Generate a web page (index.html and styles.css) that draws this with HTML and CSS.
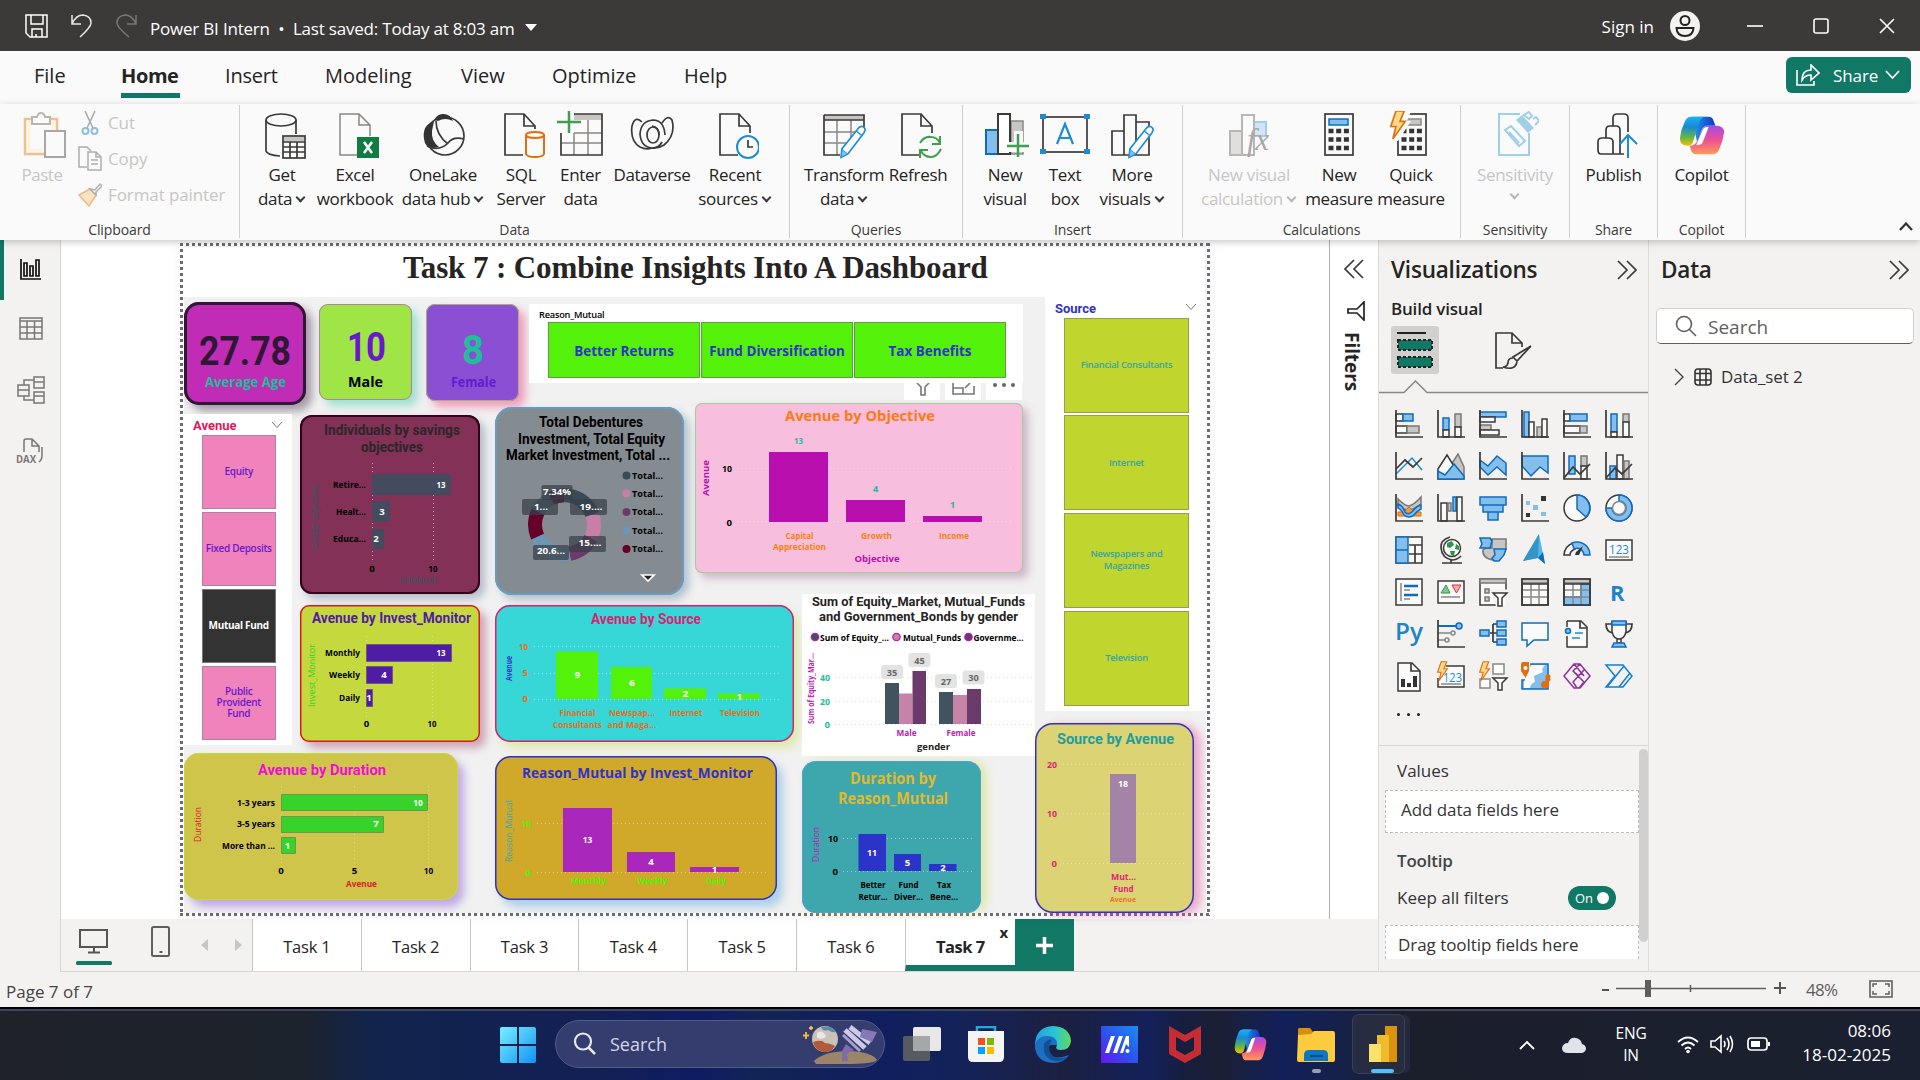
FILE: index.html
```html
<!DOCTYPE html>
<html lang="en">
<head>
<meta charset="utf-8">
<title>Power BI Intern</title>
<link rel="stylesheet" href="styles.css">
</head>
<body>
<svg class="defs" aria-hidden="true">
  <defs>
    <symbol id="axis" viewBox="0 0 28 28"><path class="k" d="M1 0V27H28"/></symbol>
    <symbol id="bolt" viewBox="0 0 16 30"><path fill="#fcd98a" stroke="#e0700f" stroke-width="1.6" d="M6 1H14L10 11H15L3 28L6 16H1Z"/></symbol>
    <symbol id="pencil" viewBox="0 0 32 40"><path fill="#fafafa" stroke="#1e8bd3" stroke-width="2" d="M3 28L23 3Q27 0 30 4Q31 6 29 9L10 34L2 38Z"/><path fill="#83beec" stroke="#1e8bd3" d="M3 29L10 34L2 38Z"/><path stroke="#1e8bd3" stroke-width="1.5" d="M20 7L26 12"/></symbol>
    <symbol id="dbl" viewBox="0 0 20 20"><path class="k" d="M1 1L10 10L1 19M10 1L19 10L10 19"/></symbol>
    <linearGradient id="cpA" x1="0" y1="0" x2="0" y2="1"><stop offset="0" stop-color="#19b5f1"/><stop offset=".35" stop-color="#1a87d8"/><stop offset=".7" stop-color="#5fb648"/><stop offset="1" stop-color="#f6c000"/></linearGradient>
    <linearGradient id="cpB" x1="0" y1="0" x2="0" y2="1"><stop offset="0" stop-color="#a34be8"/><stop offset=".5" stop-color="#ee5092"/><stop offset="1" stop-color="#ff9a5a"/></linearGradient>
    <linearGradient id="cpC" x1="0" y1="0" x2="1" y2="0"><stop offset="0" stop-color="#1ba0ee"/><stop offset="1" stop-color="#1038c4"/></linearGradient>
    <linearGradient id="win" x1="0" y1="0" x2="1" y2="1"><stop offset="0" stop-color="#77f0ff"/><stop offset="1" stop-color="#1292f5"/></linearGradient>
    <linearGradient id="edgeG" x1="0" y1="0" x2="1" y2="0"><stop offset="0" stop-color="#249fe0"/><stop offset=".55" stop-color="#2bc4d6"/><stop offset="1" stop-color="#5fdc58"/></linearGradient>
    <linearGradient id="asus" x1="0" y1="1" x2="1" y2="0"><stop offset="0" stop-color="#6a11f5"/><stop offset=".5" stop-color="#2a55ee"/><stop offset="1" stop-color="#1b8cf5"/></linearGradient>
    <symbol id="copilot" viewBox="0 0 48 48">
      <path fill="url(#cpC)" d="M13 2H31Q35 2 36 7L38 13H30Q25 13 23 20L19 33Z"/>
      <path fill="url(#cpA)" d="M13 2H26Q22 4 20 12L15 31Q14 37 9 37Q1 37 1 28Q2 17 6 8Q8 2 13 2Z"/>
      <path fill="url(#cpB)" d="M39 13Q47 13 47 21Q46 31 42 41Q40 47 35 47H17Q13 47 12 40L11 37Q17 37 19 31L24 18Q26 13 31 13Z"/>
      <path fill="#fff" d="M25 17Q26 14 31 14L25 32Q24 36 18 36Z"/>
    </symbol>
  </defs>
</svg>

<header class="titlebar">
  <svg width="24" height="24" viewBox="0 0 24 24"><path d="M1 1H22V23H5L1 19ZM6 1V10H18V1M7 23V15H17V23M11 20V23" fill="none" stroke="#fff" stroke-width="1.5"/></svg>
  <svg class="undo" width="22" height="24" viewBox="0 0 22 24"><path d="M1 1V10H10M1 10Q5 1 12 1Q20 2 20 9Q20 13 9 23" fill="none" stroke="#e8e8e8" stroke-width="1.5"/></svg>
  <svg class="redo" width="22" height="24" viewBox="0 0 22 24"><path d="M20 1V10H11M20 10Q16 1 9 1Q1 2 1 9Q1 13 13 23" fill="none" stroke="#797775" stroke-width="1.5"/></svg>
  <span class="doc-name">Power BI Intern&nbsp; • &nbsp;Last saved: Today at 8:03 am</span>
  <i class="caret"></i>
  <span class="spacer"></span>
  <span class="signin">Sign in</span>
  <svg class="avatar" width="30" height="30" viewBox="0 0 30 30"><circle cx="15" cy="15" r="15" fill="#f3f2f1"/><circle cx="15" cy="9.500" r="4.500" fill="none" stroke="#222" stroke-width="2"/><path d="M6.500 17H23.500Q23 25 15 25Q7 25 6.500 17Z" fill="none" stroke="#222" stroke-width="2"/></svg>
  <svg class="wc" width="16" height="16" viewBox="0 0 16 16"><path d="M0 8H16" stroke="#fff" stroke-width="1.6"/></svg>
  <svg class="wc" width="16" height="16" viewBox="0 0 16 16"><rect x="1" y="1" width="14" height="14" rx="2" fill="none" stroke="#fff" stroke-width="1.6"/></svg>
  <svg class="wc" width="16" height="16" viewBox="0 0 16 16"><path d="M1 1L15 15M15 1L1 15" stroke="#fff" stroke-width="1.6"/></svg>
</header>

<nav class="menu">
  <a class="m1">File</a><a class="m2 on">Home</a><a class="m3">Insert</a><a class="m4">Modeling</a><a class="m5">View</a><a class="m6">Optimize</a><a class="m7">Help</a>
  <span class="spacer"></span>
  <button class="share"><svg width="24" height="22" viewBox="0 0 24 22"><path d="M1 6V21H18V17M6 16Q6 6 15 6V1L23 9L15 16V11Q9 11 6 16Z" fill="none" stroke="#fff" stroke-width="1.6"/></svg><span>Share</span><svg width="15" height="10" viewBox="0 0 15 10"><path d="M1 1L7.500 8L14 1" fill="none" stroke="#fff" stroke-width="1.6"/></svg></button>
</nav>

<section class="ribbon">
  <div class="grp clipboard">
    <div class="btns">
      <div class="rb dim paste"><svg width="48" height="48" viewBox="0 0 48 48"><path d="M13 8H7V43H26M33 8H39V19" fill="none" stroke="#efc08c" stroke-width="2.500"/><path d="M10 11V40H25V20H36V11Z" fill="#fdf2d6"/><path d="M12 14V38H25V20H34V14Z" fill="#fafafa"/><path d="M14 6H19Q20 2 23 2Q26 2 27 6H32V13H14Z" fill="#fafafa" stroke="#b8b6b4" stroke-width="2"/><rect x="27" y="20" width="20" height="26" fill="#fafafa" stroke="#a9a7a5" stroke-width="2"/></svg><span>Paste</span></div>
      <div class="clip-list dim">
        <div><svg width="24" height="26" viewBox="0 0 24 26"><path d="M7 1L15 18M17 1L9 18" stroke="#a9a7a5" stroke-width="1.500"/><circle cx="7.500" cy="21" r="3" fill="none" stroke="#8ebfdf" stroke-width="2"/><circle cx="16.500" cy="21" r="3" fill="none" stroke="#8ebfdf" stroke-width="2"/></svg><span>Cut</span></div>
        <div><svg width="24" height="26" viewBox="0 0 24 26"><path d="M9 21H1V1H9L13 5M10 6H18L23 11V24H10ZM18 6V11H23M13 14H20M13 18H20" fill="none" stroke="#b0aeac" stroke-width="1.500"/></svg><span>Copy</span></div>
        <div><svg width="24" height="26" viewBox="0 0 24 26"><path d="M1 13L12 7L18 13L11 24Z" fill="#fbe3c0" stroke="#edb98a" stroke-width="1.500"/><path d="M12 7L17 8L22 2L24 4L18 10L18 13Z" fill="#fff" stroke="#b0aeac" stroke-width="1.500"/></svg><span>Format painter</span></div>
      </div>
    </div>
    <h6>Clipboard</h6>
  </div>
  <div class="grp data">
    <div class="btns">
      <div class="rb w60"><svg width="48" height="48" viewBox="0 0 48 48"><path class="k" d="M8 9V40Q9 44 22 45M38 9V23"/><ellipse class="k" cx="23" cy="9" rx="15" ry="6"/><rect x="25" y="25" width="22" height="22" class="k"/><path fill="#c8c6c4" d="M26 26H46V30H26Z"/><path class="k" stroke-width="1" d="M25 31H47M25 36H47M25 41H47M32 31V47M39 31V47"/></svg><span>Get<br>data<b></b></span></div>
      <div class="rb w86"><svg width="48" height="48" viewBox="0 0 48 48"><path class="kg" d="M26 44H9V3H28L39 14V25M28 3V14H39"/><rect x="26" y="26" width="22" height="21" fill="#107c41"/><path d="M33 31L41 42M41 31L33 42" stroke="#fff" stroke-width="2.500"/></svg><span>Excel<br>workbook</span></div>
      <div class="rb w90"><svg width="48" height="48" viewBox="0 0 48 48"><ellipse class="k" cx="26" cy="25" rx="19" ry="19"/><path fill="#333" d="M15 9Q19 2 25 3Q32 4 34 10Q26 6 19 10ZM15 10Q3 14 5 28Q6 37 14 37L20 36Q12 30 13 20Z"/><path class="k" d="M17 10Q17 24 29 33M8 35Q20 41 29 32Q34 25 45 28"/></svg><span>OneLake<br>data hub<b></b></span></div>
      <div class="rb w66"><svg width="48" height="48" viewBox="0 0 48 48"><path class="k" d="M26 44H8V3H27L38 15V18M27 3V15H38"/><path fill="#fafafa" stroke="#e0700f" stroke-width="2" d="M29 24V43Q30 46 38 46Q46 46 47 43V24"/><ellipse cx="38" cy="24" rx="9" ry="3" fill="#fafafa" stroke="#e0700f" stroke-width="2"/></svg><span>SQL<br>Server</span></div>
      <div class="rb w53"><svg width="48" height="48" viewBox="0 0 48 48"><path fill="#c8c6c4" d="M17 3H45V9H17Z"/><path class="kg" d="M4 32H45M17 22V44M31 9V44M17 22H45"/><path class="k" d="M17 3H45V44H4V22"/><path d="M12 0V22M0 11H24" stroke="#3f9f4f" stroke-width="2.500"/></svg><span>Enter<br>data</span></div>
      <div class="rb w90"><svg width="48" height="48" viewBox="0 0 48 48"><ellipse class="k" cx="25" cy="24" rx="6" ry="8"/><path class="k" d="M37 24Q36 9 25 9Q13 10 12 23Q13 36 24 37Q31 37 34 31M31 24Q31 16 24 15M14 11Q7 4 4 15Q2 30 12 36Q18 39 24 37M34 12Q40 3 44 9Q48 24 36 34Q30 38 24 37"/></svg><span>Dataverse</span></div>
      <div class="rb w76"><svg width="48" height="48" viewBox="0 0 48 48"><path class="k" d="M27 44H9V3H28L39 15V22M28 3V15H39"/><circle cx="37" cy="36" r="11" fill="#fafafa" stroke="#1e8bd3" stroke-width="2"/><path class="k" d="M37 29V36H42"/></svg><span>Recent<br>sources<b></b></span></div>
    </div>
    <h6>Data</h6>
  </div>
  <div class="grp queries">
    <div class="btns">
      <div class="rb w78"><svg width="48" height="48" viewBox="0 0 48 48"><path class="kg" d="M4 21H40M4 32H28M17 9V44M31 9V30"/><path fill="#c8c6c4" d="M4 4H44V9H4Z"/><path class="k" d="M4 4H44V20M4 9H44M4 4V44H20"/><use href="#pencil" x="17" y="14" width="32" height="34"/></svg><span>Transform<br>data<b></b></span></div>
      <div class="rb w70"><svg width="48" height="48" viewBox="0 0 48 48"><path class="k" d="M27 44H8V3H27L38 15V22M27 3V15H38"/><path d="M26 32Q30 25 37 26Q43 26 46 32M46 25V33H38M47 38Q43 46 37 46Q30 46 27 40M26 47V39H34" fill="none" stroke="#3f9f4f" stroke-width="2"/></svg><span>Refresh</span></div>
    </div>
    <h6>Queries</h6>
  </div>
  <div class="grp insert">
    <div class="btns">
      <div class="rb w56"><svg width="48" height="48" viewBox="0 0 48 48"><path fill="#c8c6c4" stroke="#8a8886" stroke-width="1.500" d="M30 10H42V43H30Z"/><path fill="#83beec" stroke="#0f6cbd" stroke-width="2" d="M5 19H17V43H5Z"/><path fill="#fff" stroke="#3b3a39" stroke-width="2" d="M17 3H29V43H17Z"/><path fill="#fafafa" d="M33 20H42V31H48V41H26V31H33Z"/><path d="M37 23V46M26 35H48" stroke="#3f9f4f" stroke-width="2.500"/></svg><span>New<br>visual</span></div>
      <div class="rb w64"><svg width="50" height="48" viewBox="0 0 50 48"><rect x="3" y="6" width="44" height="35" class="k"/><path fill="#1e8bd3" d="M0 3H6V8H0ZM44 3H50V8H44ZM0 38H6V43H0ZM44 38H50V43H44Z"/><path d="M17 33L25 13L33 33M20 27H30" fill="none" stroke="#1e8bd3" stroke-width="2.200"/></svg><span>Text<br>box</span></div>
      <div class="rb w70"><svg width="48" height="48" viewBox="0 0 48 48"><path class="k" d="M16 44H4V20H16M16 4H28V44H16ZM28 11H41V44H28"/><use href="#pencil" x="17" y="14" width="32" height="34"/></svg><span>More<br>visuals<b></b></span></div>
    </div>
    <h6>Insert</h6>
  </div>
  <div class="grp calc">
    <div class="btns">
      <div class="rb w104 dim"><svg width="48" height="48" viewBox="0 0 48 48"><path fill="#e1dfdd" stroke="#b8b6b4" stroke-width="2" d="M5 20H17V44H5Z"/><path fill="#cfe4f5" stroke="#a5cde8" stroke-width="2" d="M29 11H41V25H29Z"/><path fill="#fafafa" stroke="#b8b6b4" stroke-width="2" d="M17 4H29V44H17Z"/><text class="fx" x="22" y="39">fx</text></svg><span>New visual<br>calculation<b></b></span></div>
      <div class="rb w76"><svg width="48" height="48" viewBox="0 0 48 48"><rect x="10" y="3" width="28" height="41" class="k"/><rect x="14" y="8" width="19" height="6" fill="#83beec" stroke="#0f6cbd" stroke-width="1.500"/><path d="M13.500 20H34M13.500 28.500H34M13.500 37H34" stroke="#333" stroke-width="4.500" stroke-dasharray="5 2.700"/></svg><span>New<br>measure</span></div>
      <div class="rb w68"><svg width="48" height="48" viewBox="0 0 48 48"><rect x="11" y="3" width="28" height="41" class="k"/><rect x="17" y="8" width="17" height="6" fill="#c8c6c4" stroke="#8a8886" stroke-width="1.500"/><path d="M14.500 20H35M14.500 28.500H35M14.500 37H35" stroke="#333" stroke-width="4.500" stroke-dasharray="5 2.700"/><path fill="#fafafa" d="M7 0H24L20 10H24L11 30H0Z"/><use href="#bolt" x="1" y="-1" width="20" height="31"/></svg><span>Quick<br>measure</span></div>
    </div>
    <h6>Calculations</h6>
  </div>
  <div class="grp sens"><div class="btns"><div class="rb w108 dim"><svg width="48" height="48" viewBox="0 0 48 48"><path d="M29 3H8V44H38V22" fill="none" stroke="#9fcfe9" stroke-width="2"/><path d="M14 19L20 15L34 30L28 35Z" fill="none" stroke="#9fcfe9" stroke-width="2"/><path d="M25 9L31 4L43 17L37 22Z" fill="#9fcfe9"/><path d="M33 4L38 1L41 5L38 8ZM42 8L45 6L48 10L44 14" fill="none" stroke="#9fcfe9" stroke-width="2"/><path d="M18 21L28 32" stroke="#9fcfe9" stroke-width="2"/></svg><span>Sensitivity<br><b class="solo"></b></span></div></div><h6>Sensitivity</h6></div>
  <div class="grp shr"><div class="btns"><div class="rb w87"><svg width="48" height="48" viewBox="0 0 48 48"><path class="k" d="M23 43H11Q8 43 8 39V31Q8 27 12 27H18Q23 27 23 31V43H30V19Q30 15 26 15H20Q16 15 16 19V27M23 15V7Q23 3 27 3H34Q38 3 38 7V21M30 43H34"/><path d="M38 47V24M30 33L38 24L47 33" fill="none" stroke="#1e8bd3" stroke-width="2"/></svg><span>Publish</span></div></div><h6>Share</h6></div>
  <div class="grp cop"><div class="btns"><div class="rb w87"><svg width="46" height="40" viewBox="0 0 48 48" preserveAspectRatio="none" class="cp"><use href="#copilot"/></svg><span>Copilot</span></div></div><h6>Copilot</h6></div>
  <svg class="collapse" width="14" height="9" viewBox="0 0 14 9"><path d="M1 8L7 1.500L13 8" fill="none" stroke="#333" stroke-width="2.200"/></svg>
</section>

<main class="workspace">
  <aside class="rail">
    <svg width="24" height="24" viewBox="0 0 24 24"><path d="M2 1V21H22M5 5H8V18H5ZM11 8H14V18H11ZM17 2H20V18H17Z" fill="none" stroke="#111" stroke-width="1.700"/></svg>
    <svg width="24" height="24" viewBox="0 0 24 24"><path d="M1 1H23V22H1ZM1 4H23M1 10H23M1 16H23M8 4V22M15.500 4V22" fill="none" stroke="#797775" stroke-width="1.500"/></svg>
    <svg width="28" height="28" viewBox="0 0 28 28"><path d="M1 9H12V20H1ZM1 14H12M17 1H27V12H17ZM17 6H27M17 16H27V27H17ZM17 20H27M7 9V4H17M7 20V24H17" fill="none" stroke="#797775" stroke-width="1.500"/></svg>
    <svg width="30" height="30" viewBox="-1 0 30 30"><path d="M8 14V3Q8 1 10 1H16L23 8V14M16 1V8H23M26 9V17Q26 22 23 24" fill="none" stroke="#797775" stroke-width="1.500"/><text x="0" y="25" class="dax" textLength="20">DAX</text></svg>
  </aside>

  <div class="center">
    <div class="upper">
      <div class="stage">
        <div class="page">
          <div class="title-strip">Task 7 : Combine Insights Into A Dashboard</div>

          <div class="v card1"><svg viewBox="184 302 122 103"><text class="din" font-size="40" x="199" y="365" textLength="92" fill="#2f1735">27.78</text><text class="seg" font-size="14" x="205" y="387" textLength="81" fill="#20bd9a">Average Age</text></svg></div>
          <div class="v card2"><svg viewBox="319 304 93 96"><text class="din" font-size="40" x="347" y="361" textLength="19" fill="#6a18cd">1</text><text class="din" font-size="40" x="366" y="361" textLength="20" fill="#6a18cd">0</text><text class="seg" font-size="15" x="348" y="387" textLength="35">Male</text></svg></div>
          <div class="v card3"><svg viewBox="426 304 93 97"><text class="din" font-size="41" x="462" y="364" textLength="22" fill="#1fbf9c">8</text><text class="seg" font-size="15" x="451" y="387" textLength="45" fill="#611bd0">Female</text></svg></div>

          <div class="v reason"><span>Reason_Mutual</span><div><b>Better Returns</b><b>Fund Diversification</b><b>Tax Benefits</b></div></div>
          <div class="v vtools">
            <i><svg viewBox="0 0 36 17"><path d="M13 0L17 4V12H21V4L25 0" fill="none" stroke="#777" stroke-width="1.600"/></svg></i>
            <i><svg viewBox="0 0 36 17"><path d="M8 0V11H29V3M8 5H18V11M20 5L25 0" fill="none" stroke="#777" stroke-width="1.600"/></svg></i>
            <i><svg viewBox="0 0 36 17"><circle cx="9" cy="2" r="2" fill="#666"/><circle cx="18" cy="2" r="2" fill="#666"/><circle cx="27" cy="2" r="2" fill="#666"/></svg></i>
          </div>

          <div class="v slicer avenue"><h5>Avenue<svg width="12" height="8" viewBox="0 0 12 8"><path d="M1 1L6 6.500L11 1" fill="none" stroke="#777"/></svg></h5><b>Equity</b><b>Fixed Deposits</b><b class="sel">Mutual Fund</b><b>Public<br>Provident<br>Fund</b></div>

          <div class="v source slicer"><h5>Source<svg width="12" height="8" viewBox="0 0 12 8"><path d="M1 1L6 6.500L11 1" fill="none" stroke="#777"/></svg></h5><b>Financial Consultants</b><b>Internet</b><b>Newspapers and<br>Magazines</b><b>Television</b></div>

          <div class="v savings"><svg viewBox="300 415 180 179">
            <g class="din" font-size="14" fill="#2a2729"><text x="324" y="435" textLength="136">Individuals by savings</text><text x="361" y="452" textLength="62">objectives</text></g>
            <path class="grid" stroke="#c8a0b4" d="M372.500 463V562M433.500 463V562"/>
            <path fill="#454b5e" d="M372 474H451V495H372ZM372 501H390V522H372ZM372 529H384V549H372Z"/>
            <g class="lab" text-anchor="end"><text x="366" y="488" textLength="33">Retire...</text><text x="366" y="515" textLength="30">Healt...</text><text x="366" y="542" textLength="33">Educa...</text></g>
            <g class="lab mid wht"><text x="441" y="488" textLength="9">13</text><text x="382" y="515">3</text><text x="376" y="542">2</text></g>
            <g class="lab mid"><text x="372" y="572">0</text><text x="433" y="572" textLength="9">10</text></g>
            <text class="seg" font-size="8" x="400" y="583" textLength="37" fill="#4b4d62">Individuals</text>
            <text class="seg" font-size="8" transform="translate(318 549) rotate(-90)" textLength="65" fill="#4b4d62">savings objectives</text>
          </svg></div>

          <div class="v donut"><svg viewBox="495 407 189 188">
            <g class="din" font-size="14"><text x="539" y="427" textLength="104">Total Debentures</text><text x="518" y="443.500" textLength="147">Investment, Total Equity</text><text x="506" y="459.500" textLength="164">Market Investment, Total ...</text></g>
            <g fill="none" stroke-width="14" transform="translate(564.500 524.700) rotate(-90)">
              <circle r="29.500" pathLength="360" stroke="#374b59" stroke-dasharray="70 290"/>
              <circle r="29.500" pathLength="360" stroke="#c77fa8" stroke-dasharray="0 70 47 243"/>
              <circle r="29.500" pathLength="360" stroke="#6b3a6b" stroke-dasharray="0 117 53 190"/>
              <circle r="29.500" pathLength="360" stroke="#6b96b6" stroke-dasharray="0 170 76 114"/>
              <circle r="29.500" pathLength="360" stroke="#670029" stroke-dasharray="0 246 50 64"/>
              <circle r="29.500" pathLength="360" stroke="#527188" stroke-dasharray="0 296 36 28"/>
              <circle r="29.500" pathLength="360" stroke="#4c2440" stroke-dasharray="0 332 28 0"/>
            </g>
            <g fill="#373f47" fill-opacity=".72"><rect x="541.500" y="485" width="31" height="15" rx="2"/><rect x="522" y="499" width="36" height="16" rx="2"/><rect x="570" y="499" width="37" height="16" rx="2"/><rect x="569" y="536" width="37" height="16" rx="2"/><rect x="533" y="545" width="36" height="15" rx="2"/></g>
            <g class="lab mid wht"><text x="557" y="495" textLength="28">7.34%</text><text x="541" y="510" textLength="14">1...</text><text x="591" y="510" textLength="23">19....</text><text x="590" y="546" textLength="23">15....</text><text x="551" y="554" textLength="28">20.6...</text></g>
            <circle cx="626.500" cy="475.500" r="4" fill="#374b59"/><circle cx="626.500" cy="493.500" r="4" fill="#c77fa8"/><circle cx="626.500" cy="512" r="4" fill="#6b3a6b"/><circle cx="626.500" cy="530.500" r="4" fill="#6b96b6"/><circle cx="626.500" cy="549" r="4" fill="#670029"/>
            <g class="lab"><text x="632" y="479" textLength="31">Total...</text><text x="632" y="497" textLength="31">Total...</text><text x="632" y="515" textLength="31">Total...</text><text x="632" y="534" textLength="31">Total...</text><text x="632" y="552" textLength="31">Total...</text></g>
            <path d="M642 575H654L648 581Z" fill="#222" stroke="#fff" stroke-width="1.700"/>
          </svg></div>

          <div class="v objective"><svg viewBox="695 403 328 170">
            <text class="seg" font-size="15" font-weight="800" x="785" y="421" textLength="150" fill="#fb7b12">Avenue by Objective</text>
            <path class="grid" stroke="#f8d7ea" d="M738 468.500H1014M738 521.500H1014"/>
            <path fill="#b80fae" d="M769 452H828V522H769ZM846 500H905V522H846ZM923 516H982V522H923Z"/>
            <g class="lab mid" fill="#20bda0"><text x="798.500" y="444" textLength="9">13</text><text x="875.500" y="492">4</text><text x="952.500" y="508">1</text></g>
            <g class="lab" text-anchor="end"><text x="732" y="471.500" textLength="10">10</text><text x="732" y="525.500">0</text></g>
            <g class="lab mid" fill="#f5820f"><text x="799.500" y="539" textLength="28">Capital</text><text x="799.500" y="550" textLength="53">Appreciation</text><text x="876.500" y="539" textLength="31">Growth</text><text x="954" y="539" textLength="30">Income</text></g>
            <text class="seg" font-size="9.500" x="854.500" y="562" textLength="45" fill="#b80fae" font-weight="800">Objective</text>
            <text class="seg" font-size="9.500" transform="translate(709 496) rotate(-90)" textLength="36" fill="#b80fae">Avenue</text>
          </svg></div>

          <div class="v monitor"><svg viewBox="300 605 180 137">
            <text class="din" font-size="14" x="312" y="623" textLength="159" fill="#4f1ca5">Avenue by Invest_Monitor</text>
            <path class="grid" stroke="#d6e590" d="M366.500 636V718M432.500 636V718"/>
            <path fill="#4f1ca5" stroke="#6c5a86" d="M366.500 644.500H451.500V661.500H366.500ZM366.500 666.500H392.500V683.500H366.500ZM366.500 689.500H372.500V706.500H366.500Z"/>
            <g class="lab" text-anchor="end"><text x="360" y="656" textLength="35">Monthly</text><text x="360" y="678" textLength="31">Weekly</text><text x="360" y="701" textLength="21">Daily</text></g>
            <g class="lab mid wht"><text x="441" y="656" textLength="9">13</text><text x="384" y="678">4</text><text x="369" y="701">1</text></g>
            <g class="lab mid"><text x="366.500" y="727">0</text><text x="432" y="727" textLength="9">10</text></g>
            <text class="seg thin" font-size="9" transform="translate(315 707) rotate(-90)" textLength="63" fill="#2ed02e">Invest_Monitor</text>
          </svg></div>

          <div class="v bysource"><svg viewBox="495 605 299 137">
            <text class="din" font-size="14" x="591" y="624" textLength="110" fill="#dc1f72">Avenue by Source</text>
            <path class="grid" stroke="#8fe6ea" d="M534 646.500H782M534 673.500H782M534 699.500H782"/>
            <path fill="#54f20a" d="M556 651.500H598V699H556ZM611 667H652V699H611ZM664 688.500H706V699H664ZM718 693.500H760V699H718Z"/>
            <g class="lab mid wht"><text x="577.500" y="678">9</text><text x="632" y="686">6</text><text x="685.500" y="697">2</text><text x="739.500" y="700">1</text></g>
            <g class="lab" fill="#e0701a" text-anchor="end"><text x="528" y="650" textLength="9">10</text><text x="528" y="676">5</text><text x="528" y="702">0</text></g>
            <g class="lab mid" fill="#e0701a"><text x="577.500" y="716" textLength="36">Financial</text><text x="577.500" y="728" textLength="49">Consultants</text><text x="632" y="716" textLength="46">Newspap...</text><text x="632" y="728" textLength="49">and Maga...</text><text x="686" y="716" textLength="33">Internet</text><text x="740" y="716" textLength="40">Television</text></g>
            <text class="seg" font-size="8" transform="translate(512 681) rotate(-90)" textLength="25" fill="#2f32c8">Avenue</text>
          </svg></div>

          <div class="v gender"><svg viewBox="802 594 233 162">
            <g class="din" font-size="13" fill="#252423"><text x="812" y="606" textLength="213">Sum of Equity_Market, Mutual_Funds</text><text x="819" y="621" textLength="199">and Government_Bonds by gender</text></g>
            <g stroke="#b91eac" stroke-width="1.300"><circle cx="815" cy="637" r="3.700" fill="#40535f"/><circle cx="896.500" cy="637" r="3.700" fill="#c583a8"/><circle cx="968.500" cy="637" r="3.700" fill="#6b3a6b"/></g>
            <g class="lab"><text x="820" y="640.500" textLength="69">Sum of Equity_...</text><text x="903" y="640.500" textLength="58">Mutual_Funds</text><text x="973.500" y="640.500" textLength="50">Governme...</text></g>
            <path class="grid" stroke="#ddd" d="M835 677.500H1032M835 701.500H1032M835 724.500H1032"/>
            <path fill="#40535f" d="M885 683H899V724H885ZM939 692H953V724H939Z"/><path fill="#c583a8" d="M899 693.500H912.500V724H899ZM953 695H967V724H953Z"/><path fill="#6b3a6b" d="M912.500 671H926V724H912.500ZM967 689H981V724H967Z"/>
            <g fill="#e3e3e3"><rect x="881" y="665" width="22" height="14" rx="3"/><rect x="908.500" y="653" width="22" height="14" rx="3"/><rect x="935" y="674" width="22" height="14" rx="3"/><rect x="962.500" y="670.500" width="22" height="14" rx="3"/></g>
            <g class="lab mid" fill="#666"><text x="892" y="675.500" textLength="10.500">35</text><text x="919.500" y="663.500" textLength="10.500">45</text><text x="946" y="684.500" textLength="10.500">27</text><text x="973.500" y="680.500" textLength="10.500">30</text></g>
            <g class="lab" text-anchor="end" fill="#20bda0"><text x="830" y="680.500" textLength="10">40</text><text x="830" y="704.500" textLength="10">20</text><text x="830" y="727.500">0</text></g>
            <g class="lab mid" fill="#b91eac"><text x="906.500" y="736" textLength="20">Male</text><text x="961" y="736" textLength="29">Female</text></g>
            <text class="seg" font-size="9.500" x="917" y="750" textLength="33" fill="#222">gender</text>
            <text class="seg" font-size="9" transform="translate(814 724) rotate(-90)" textLength="71" fill="#b91eac">Sum of Equity_Mar...</text>
          </svg></div>

          <div class="v duration"><svg viewBox="184 753 274 147">
            <text class="din" font-size="14" x="258" y="775" textLength="128" fill="#f00bd8">Avenue by Duration</text>
            <path class="grid" stroke="#e0d98c" d="M281.500 786V868M354.500 786V868M428.500 786V868"/>
            <path fill="#38d32a" stroke="#6f9650" d="M281.500 794.500H427.500V810.500H281.500ZM281.500 816.500H383.500V832.500H281.500ZM281.500 837.500H295.500V853.500H281.500Z"/>
            <g class="lab" text-anchor="end"><text x="275" y="806" textLength="38">1-3 years</text><text x="275" y="827" textLength="38">3-5 years</text><text x="275" y="849" textLength="53">More than ...</text></g>
            <g class="lab mid wht"><text x="418" y="806" textLength="9.500">10</text><text x="376" y="827">7</text><text x="287.500" y="849">1</text></g>
            <g class="lab mid"><text x="281" y="874">0</text><text x="354.500" y="874">5</text><text x="428.500" y="874" textLength="9.500">10</text></g>
            <text class="seg" font-size="9" x="346" y="887" textLength="31" fill="#d8202c">Avenue</text>
            <text class="seg thin" font-size="9" transform="translate(201 842) rotate(-90)" textLength="35" fill="#d8202c">Duration</text>
          </svg></div>

          <div class="v reasonby"><svg viewBox="495 756 282 144">
            <text class="seg" font-size="14" x="522" y="778" textLength="231" fill="#2f32c8">Reason_Mutual by Invest_Monitor</text>
            <path class="grid" stroke="#dfc67a" d="M537 823.500H766M537 872.500H766"/>
            <path fill="#aa27bb" d="M563 808H612V872H563ZM627 852H675V872H627ZM690 867H739V872H690Z"/>
            <g class="lab mid wht"><text x="587.500" y="843" textLength="9.500">13</text><text x="651" y="865">4</text><text x="714.500" y="873">1</text></g>
            <g class="lab" text-anchor="end" fill="#54f20a"><text x="531" y="826.500" textLength="9.500">10</text><text x="531" y="875.500">0</text></g>
            <g class="lab mid" fill="#54f20a"><text x="588.500" y="883.500" textLength="35">Monthly</text><text x="652.500" y="883.500" textLength="30">Weekly</text><text x="716" y="883.500" textLength="20">Daily</text></g>
            <text class="seg thin" font-size="9" transform="translate(512 862) rotate(-90)" textLength="62" fill="#3da7ad">Reason_Mutual</text>
          </svg></div>

          <div class="v durby"><svg viewBox="802 761 179 152">
            <g class="seg" font-size="15.500" fill="#e3b92b"><text x="850" y="783.500" textLength="86">Duration by</text><text x="838" y="804" textLength="110">Reason_Mutual</text></g>
            <path class="grid" stroke="#93cdd0" d="M843 838.500H973M843 871.500H973"/>
            <path fill="#2c33c8" d="M858.500 834H886V871H858.500ZM894 854H921V871H894ZM929 864H956.500V871H929Z"/>
            <g class="lab mid wht"><text x="872" y="856" textLength="10">11</text><text x="907.500" y="866">5</text><text x="943" y="871">2</text></g>
            <g class="lab" text-anchor="end"><text x="838" y="841.500" textLength="10">10</text><text x="838" y="874.500">0</text></g>
            <g class="lab mid"><text x="873" y="888" textLength="25">Better</text><text x="873" y="900" textLength="29">Retur...</text><text x="908.500" y="888" textLength="20">Fund</text><text x="908.500" y="900" textLength="29">Diver...</text><text x="944" y="888" textLength="14">Tax</text><text x="944" y="900" textLength="28">Bene...</text></g>
            <text class="seg thin" font-size="9" transform="translate(819 862) rotate(-90)" textLength="35" fill="#b022b8">Duration</text>
          </svg></div>

          <div class="v sourceby"><svg viewBox="1035 723 159 190">
            <text class="din" font-size="14.500" x="1057" y="744" textLength="117" fill="#1f9d9d">Source by Avenue</text>
            <path class="grid" stroke="#e9e4ac" d="M1063 764.500H1184M1063 813.500H1184M1063 863.500H1184"/>
            <path fill="#a383a6" d="M1110 774H1136V863H1110Z"/>
            <text class="lab mid wht" x="1123" y="787" textLength="10">18</text>
            <g class="lab" text-anchor="end" fill="#e01f78"><text x="1057" y="767.500" textLength="10">20</text><text x="1057" y="817" textLength="10">10</text><text x="1057" y="866.500">0</text></g>
            <g class="lab mid" fill="#e01f78"><text x="1123.500" y="880" textLength="25">Mut...</text><text x="1123.500" y="892" textLength="20">Fund</text></g>
            <text class="seg" font-size="7.500" x="1110" y="901.500" textLength="26" fill="#f4701f">Avenue</text>
          </svg></div>
        </div>
      </div>
      <aside class="filters">
        <svg width="20" height="20" viewBox="0 0 20 20"><path class="k" d="M10 1L1 10L10 19M19 1L10 10L19 19"/></svg>
        <svg class="funnel" width="20" height="20" viewBox="0 0 20 20"><path d="M18 1V19L11 12H2V8H11Z" fill="none" stroke="#222" stroke-width="1.700"/></svg>
        <span>Filters</span>
      </aside>
    </div>
    <div class="tabs">
      <div class="tools">
        <svg class="desk" width="36" height="40" viewBox="0 0 36 40"><path d="M4 5H31V22H4ZM18 22V27M12 27.500H24" fill="none" stroke="#555" stroke-width="2"/><rect x="0" y="36" width="36" height="4" rx="1.500" fill="#117865"/></svg>
        <svg class="phone" width="20" height="31" viewBox="0 0 20 31"><rect x="1" y="1" width="17" height="29" rx="1.500" fill="none" stroke="#605e5c" stroke-width="2"/><rect x="8.500" y="25" width="3" height="2" fill="#605e5c"/></svg>
        <svg class="arr" width="42" height="12" viewBox="0 0 42 12"><path fill="#c8c6c4" d="M7 0V12L0 6ZM34 0V12L41 6Z"/></svg>
      </div>
      <span>Task 1</span><span>Task 2</span><span>Task 3</span><span>Task 4</span><span>Task 5</span><span>Task 6</span><span class="on">Task 7<em>x</em></span>
      <button class="add"><svg width="17" height="17" viewBox="0 0 17 17"><path d="M8.500 0V17M0 8.500H17" stroke="#fff" stroke-width="3.500"/></svg></button>
    </div>
  </div>

  <aside class="viz">
    <div class="ph"><h2>Visualizations</h2><svg width="20" height="20"><use href="#dbl"/></svg></div>
    <h3>Build visual</h3>
    <div class="modes">
      <div class="tile"><svg width="38" height="42" viewBox="0 0 38 42"><path d="M0 3H29" stroke="#222" stroke-width="2"/><g fill="#117865" stroke="#222" stroke-width="2" stroke-dasharray="3 2"><rect x="1" y="10" width="34" height="10"/><rect x="1" y="27" width="34" height="10"/></g></svg></div>
      <svg class="fmt" width="38" height="38" viewBox="0 0 38 38"><path class="k" d="M8 36H1V1H17L27 11V15M17 1V11H27M36 14L22 29L18 25ZM18 26Q13 26 13 31Q12 35 8 35Q20 39 22 30"/></svg>
    </div>
    <svg class="rule" width="270" height="14" viewBox="0 0 270 14"><path d="M0 12.500H25L36.500 1L48 12.500H270" fill="none" stroke="#8a8886" stroke-width="1.500"/></svg>
    <div class="icons">
      <svg><path class="w" d="M1 4H8V11H1Z"/><path class="b" d="M8 4H18V11H8Z"/><path class="w" d="M1 16H12V23H1Z"/><path class="g" d="M12 16H24V23H12Z"/><use href="#axis"/></svg>
      <svg><path class="b" d="M6 8H12V20H6Z"/><path class="w" d="M6 20H12V27H6Z"/><path class="g" d="M18 4H24V17H18Z"/><path class="w" d="M18 17H24V27H18Z"/><use href="#axis"/></svg>
      <svg><path class="b" d="M1 2H27V7H1Z"/><path class="w" d="M1 7H16V12H1Z"/><path class="g" d="M1 15H12V20H1Z"/><path class="w" d="M1 20H20V25H1Z"/><use href="#axis"/></svg>
      <svg><path class="b" d="M3 2H8V27H3Z"/><path class="w" d="M8 12H13V27H8Z"/><path class="g" d="M16 17H21V27H16Z"/><path class="w" d="M21 9H26V27H21Z"/><use href="#axis"/></svg>
      <svg><path class="w" d="M1 4H7V11H1Z"/><path class="b" d="M7 4H24V11H7Z"/><path class="w" d="M1 16H17V23H1Z"/><path class="g" d="M17 16H24V23H17Z"/><use href="#axis"/></svg>
      <svg><path class="b" d="M6 4H12V22H6Z"/><path class="w" d="M6 22H12V27H6Z"/><path class="g" d="M18 4H24V12H18Z"/><path class="w" d="M18 12H24V27H18Z"/><use href="#axis"/></svg>

      <svg><path class="bl" d="M1 22L17 6L27 18"/><path class="k" d="M1 17L10 8L18 15L27 6"/><use href="#axis"/></svg>
      <svg><path class="g" d="M14 13L21 2L27 15V27H14Z"/><path class="w" d="M1 17L10 3L20 19V27H1Z"/><path class="b" d="M1 27V19L8 23L17 12L27 24V27Z"/></svg>
      <svg><path class="b" d="M1 8L9 14L18 4L27 11V23L18 15L9 23L1 15Z"/><use href="#axis"/></svg>
      <svg><path class="b" d="M1 4H27V21L19 15L10 24L1 14Z"/><use href="#axis"/></svg>
      <svg><path class="b" d="M6 4H12V22H6Z"/><path class="g" d="M18 4H24V14H18Z"/><path class="w" d="M18 14H24V27H18Z"/><path class="k" d="M1 26L10 15L17 22L27 12"/><use href="#axis"/></svg>
      <svg><path class="b" d="M5 14H11V27H5Z"/><path class="w" d="M12 3H18V27H12Z"/><path class="g" d="M19 9H24V27H19Z"/><path class="k" d="M1 26L10 16L17 22L27 12"/><use href="#axis"/></svg>

      <svg><path class="g" d="M3 5Q10 12 14 12Q19 11 26 3V10Q18 16 13 16Q7 15 3 12Z"/><path fill="#f29b3a" stroke="#e0700f" d="M3 18H9L14 13L19 18H26V22H3Z"/><path class="b" d="M3 10Q8 12 10 18Q13 22 18 17Q21 12 26 11V15Q22 17 19 21Q14 25 9 21Q6 15 3 14Z"/><use href="#axis"/></svg>
      <svg><path class="w" d="M4 9H10V27H4Z"/><path class="g" d="M11 9H14V17H11Z"/><path class="b" d="M16 3H19V17H16Z"/><path class="w" d="M20 3H25V27H20Z"/><use href="#axis"/></svg>
      <svg><path class="b" d="M1 3H27V11H1ZM4 11H24V18H4ZM9 18H19V26H9Z"/></svg>
      <svg><path fill="#83beec" d="M5 7H9V11H5ZM12 11H17V16H12ZM20 18H25V22H20Z"/><path fill="#333" d="M20 2H25V7H20ZM5 19H9V23H5Z"/><use href="#axis"/></svg>
      <svg><circle class="w" cx="14" cy="14" r="13"/><path class="b" d="M14 1A13 13 0 0 1 23 23L14 15Z"/></svg>
      <svg><circle class="w" cx="14" cy="14" r="13"/><path class="b" d="M14 1A13 13 0 1 1 1 14H7A7 7 0 1 0 14 7Z"/><circle class="kg" cx="14" cy="14" r="6.500"/></svg>

      <svg><path class="w" d="M1 1H27V27H1Z"/><path class="b" d="M1 1H13V27H1ZM1 14H13"/><path class="k" d="M14 9H27M20 9V27M14 18H20M20 18H27"/></svg>
      <svg><circle class="w" cx="15" cy="12" r="8.500"/><path fill="#2f9547" d="M10 7L15 5L17 9L13 12L10 11ZM19 8L22 10V14L18 13ZM13 15L18 15L17 20L14 19Z"/><path class="k" d="M13 1Q3 4 4 12Q5 22 15 24Q20 24 24 20M14 24V27M5 27H25"/></svg>
      <svg><path class="g" d="M13 3H27V13Q22 25 14 24Q3 22 4 14L7 12H13Z"/><path class="b" d="M1 2H11L13 5L11 12H1L3 8ZM15 13H27L25 19L20 25H15L13 22L16 19Z"/></svg>
      <svg><path fill="#56b7e6" d="M18 -2L24 28L17 22L2 25Z"/><path fill="#3395c8" d="M18 -2L17 22L2 25Z"/><path fill="#0f6cbd" d="M17 22L24 28L22 16Z"/></svg>
      <svg><path class="w" d="M1 19A13 13 0 0 1 10 7L12 13Q7 15 7 19Z"/><path class="b" d="M9 7A13 13 0 0 1 27 19H21A7 7 0 0 0 11 13Z"/><path fill="#333" d="M20 10L16 19L12 19L13 16Z"/></svg>
      <svg><rect class="w" x="1" y="4" width="26" height="20"/><text x="4" y="18" class="n123" textLength="20">123</text><path class="kg" d="M4 21H24"/></svg>

      <svg><rect class="w" x="1" y="1" width="26" height="26"/><path class="kg" d="M6 5V23M9 12H15M9 21H15"/><path d="M9 8H23M9 17H23" stroke="#0f6cbd" stroke-width="2.500"/></svg>
      <svg><rect class="w" x="1" y="3" width="26" height="22"/><path fill="#7dc98a" stroke="#2f9547" d="M4 15L9 7L13 15Z"/><path fill="#f7a9a3" stroke="#d13438" d="M15 7H24L19.500 15Z"/><path class="kg" d="M4 19H23"/></svg>
      <svg><path class="w" d="M1 1H27V27H1Z"/><path class="g" d="M1 1H27V5H1ZM6 11H10V15H6ZM6 19H10V23H6Z"/><path fill="#fafafa" stroke="#f3f2f1" stroke-width="3" d="M13 13H28V29H19Z"/><path class="w" d="M14 15H28L23 20V28H19V20Z"/></svg>
      <svg><path class="w" d="M1 1H27V27H1Z"/><path class="g" d="M1 1H27V5H1Z"/><path class="kg" d="M2 12H26M2 19H26M10 6V26M18 6V26"/><path class="k" d="M1 1H27V27H1ZM1 6H27"/></svg>
      <svg><path class="w" d="M1 1H27V27H1Z"/><path class="g" d="M1 1H27V5H1Z"/><path class="b" d="M18 6H27V27H1V19H18Z"/><path class="kg" d="M2 12H26M2 19H26M10 6V26M18 6V26"/><path class="k" d="M1 1H27V27H1ZM1 6H27"/></svg>
      <svg><text x="5" y="23" class="rr">R</text></svg>

      <svg><text x="0" y="20" class="py" textLength="28">Py</text></svg>
      <svg><path d="M1 6H19" stroke="#0f6cbd" stroke-width="2"/><circle class="b" cx="22" cy="6" r="3"/><path class="kg" d="M1 13H14M1 20H8"/><circle class="kg" cx="16" cy="13" r="2"/><circle class="kg" cx="10" cy="20" r="2"/><use href="#axis"/></svg>
      <svg><path class="k" d="M11 13H18M14 4V22M14 4H18M14 22H18"/><path class="b" d="M1 10H10V16H1ZM18 1H27V7H18ZM18 10H27V16H18ZM18 19H27V25H18Z"/></svg>
      <svg><path d="M1 3H27V20H13L6 26V20H1Z" fill="#fafafa" stroke="#0f6cbd" stroke-width="1.500"/></svg>
      <svg><path class="w" d="M4 1H18L24 7V27H4V16M4 7V1"/><path class="k" d="M17 1V8H24"/><circle class="b" cx="5" cy="11" r="2.500"/><path d="M12 13H20M9 18H17" stroke="#1e8bd3" stroke-width="1.500"/></svg>
      <svg><path class="w" d="M7 2H21V12Q19 19 14 19Q9 19 7 12ZM12 19V23H16V19"/><path class="k" d="M7 4H1Q1 12 8 13M21 4H27Q27 12 20 13"/><path class="b" d="M7 1H21V5H7ZM7 27L9 23H19L21 27Z"/></svg>

      <svg><path class="w" d="M3 1H17L25 9V29H3Z"/><path class="k" d="M16 1V9H25"/><path fill="#333" d="M6 17H10V25H6ZM12 21H16V25H12ZM18 14H22V25H18Z"/></svg>
      <svg><path class="w" d="M9 4H27V25H1V16"/><text x="6" y="20" class="n123" textLength="19">123</text><path class="kg" d="M4 22H24"/><use href="#bolt" x="-2" y="-1" width="15" height="21"/></svg>
      <svg><path fill="#fff" stroke="#8a8886" stroke-width="1.500" d="M14 2H25V12H14ZM1 17H11V26H1Z"/><path class="w" d="M14 16H28L23 21V28H19V21Z"/><use href="#bolt" x="-2" y="-1" width="15" height="21"/></svg>
      <svg><path class="b" d="M10 2H27V27H1V18H10Z"/><path fill="#fafafa" d="M10 3H24Q20 7 22 10L13 14L14 20Q10 21 9 26H3V20Z"/><path fill="#e0700f" d="M1 0H8V9L4.500 16L0 9V2ZM20 22A4 4 0 1 0 28 23A4 4 0 1 0 20 23ZM25 16A2.500 2.500 0 1 0 29 16A2.500 2.500 0 1 0 25 16Z"/><circle cx="4.500" cy="6" r="2" fill="#fff"/></svg>
      <svg><path d="M11 2L1 14L11 26H17L27 14L17 2ZM17 2L10 9L21 20L16 26M11 2L21 14M21 8L10 20L14 26M10 9L16 14" fill="none" stroke="#8e2f9b" stroke-width="1.500"/></svg>
      <svg><path d="M1 3H18L27 14L18 25H1L10 14ZM19 4L2 25M25 11L14 25" fill="none" stroke="#1080d8" stroke-width="1.500"/></svg>
    </div>
    <div class="more"><i></i><i></i><i></i></div>
    <div class="wells">
      <div class="wbody">
        <h4>Values</h4>
        <div class="drop">Add data fields here</div>
        <h4 class="tt">Tooltip</h4>
        <div class="keep"><span>Keep all filters</span><span class="toggle">On<i></i></span></div>
        <div class="drop cut">Drag tooltip fields here</div>
      </div>
      <div class="thumb"></div>
    </div>
  </aside>

  <aside class="fields">
    <div class="ph"><h2>Data</h2><svg width="20" height="20"><use href="#dbl"/></svg></div>
    <div class="search"><svg width="22" height="22" viewBox="0 0 22 22"><circle cx="9" cy="9" r="7.500" fill="none" stroke="#605e5c" stroke-width="1.600"/><path d="M14 14L21 21" stroke="#605e5c" stroke-width="1.600"/></svg><span>Search</span></div>
    <div class="tbl"><svg width="10" height="18" viewBox="0 0 10 18"><path d="M1 1L9 9L1 17" fill="none" stroke="#444" stroke-width="1.400"/></svg><svg width="18" height="18" viewBox="0 0 18 18"><path d="M4 1H14Q17 1 17 4V14Q17 17 14 17H4Q1 17 1 14V4Q1 1 4 1ZM6 1V17M12 1V17M1 5.500H17M1 12H17" fill="none" stroke="#333" stroke-width="1.600"/></svg><span>Data_set 2</span></div>
  </aside>
</main>

<footer class="status">
  <span>Page 7 of 7</span><span class="spacer"></span>
  <svg width="186" height="20" viewBox="0 0 186 20"><path d="M2 11H9M174 9H186M180 3V15" stroke="#555" stroke-width="2"/><path d="M16 9.500H166M90.500 6V13" stroke="#605e5c" stroke-width="1.500"/><rect x="45" y="1" width="6" height="17" fill="#605e5c"/></svg>
  <span class="pct">48%</span>
  <svg class="fit" width="24" height="18" viewBox="0 0 24 18"><path d="M1 1H23V17H1Z" fill="none" stroke="#605e5c" stroke-width="1.600"/><path d="M4 7V4H8M16 4H20V7M20 11V14H16M8 14H4V11" fill="none" stroke="#605e5c" stroke-width="1.500"/></svg>
</footer>

<div class="taskbar">
  <svg class="start" width="36" height="36" viewBox="0 0 36 36"><path fill="url(#win)" d="M2 0H17V17H0V2Q0 0 2 0ZM19 0H34Q36 0 36 2V17H19ZM0 19H17V36H2Q0 36 0 34ZM19 19H36V34Q36 36 34 36H19Z"/></svg>
  <div class="tsearch"><svg width="24" height="24" viewBox="0 0 24 24"><circle cx="10" cy="9.500" r="8" fill="none" stroke="#e6e8f2" stroke-width="2.200"/><path d="M15.500 15.500L22 22" stroke="#e6e8f2" stroke-width="2.500"/></svg><span>Search</span>
    <svg class="art" width="74" height="40" viewBox="0 0 74 40"><path fill="#9c8468" d="M10 37Q20 27 45 27Q68 28 73 36Q70 40 40 40H12Z"/><circle cx="21" cy="15" r="13" fill="#c9c2b8"/><path fill="#b35a3a" d="M9 18Q18 15 21 19Q28 20 31 22Q27 29 19 28Q11 26 9 18Z"/><path fill="#5e8ba8" d="M17 3Q28 1 32 8Q28 9 24 6Q19 8 17 3Z"/><path fill="#ece6ea" d="M13 9Q18 5 22 12Q20 16 13 14Z"/><path d="M41 6L61 24M46 3L66 19" stroke="#cfc8e8" stroke-width="5"/><path d="M39 11L56 27" stroke="#a9a0cc" stroke-width="3"/><path fill="#8379b8" d="M58 5L73 8L68 18L56 13Z"/><path fill="#7b6ea8" d="M42 20L50 26L43 30L44 37H38V27Z"/><path d="M2 8V15M-1 11.500H5M7 2V6M5 4H9" stroke="#f4bf3a" stroke-width="1.800"/></svg></div>
  <svg class="ti a" width="38" height="36" viewBox="0 0 38 36"><rect x="0" y="10" width="27" height="25" rx="2" fill="#555b61"/><rect x="10" y="1" width="28" height="24" rx="2" fill="#e8e8e8"/><rect x="10" y="10" width="17" height="15" fill="#a5a7a9"/></svg>
  <svg class="ti b1" width="36" height="36" viewBox="0 0 36 36"><path d="M9 7V1H27V7" fill="none" stroke="#25a8e0" stroke-width="2.500"/><path fill="#f4f4f4" d="M0 5H36V31Q36 36 31 36H5Q0 36 0 31Z"/><path fill="#f25022" d="M10 12H17V19H10Z"/><path fill="#7fba00" d="M19 12H26V19H19Z"/><path fill="#00a4ef" d="M10 21H17V28H10Z"/><path fill="#ffb900" d="M19 21H26V28H19Z"/></svg>
  <svg class="ti c1" width="38" height="37" viewBox="0 0 38 37"><path fill="#1d6fc4" d="M1 16Q5 8 14 9Q23 11 24 19H16Q12 22 14 27Q19 35 35 29Q30 37 19 37Q3 36 1 22Z"/><path fill="url(#edgeG)" d="M1 18Q2 1 19 0Q36 1 37 15Q36 24 27 24Q20 24 23 19Q24 12 15 10Q5 9 1 18Z"/><path fill="#124f94" d="M10 18Q13 13 18 14Q13 21 17 28Q22 34 34 31Q26 37 17 34Q8 29 10 18Z"/></svg>
  <svg class="ti d1" width="37" height="37" viewBox="0 0 37 37"><rect width="37" height="37" fill="url(#asus)"/><path fill="#fff" d="M10 10H14L8 27H4ZM18 10H22L16 27H12ZM25 10H28V21L25 18L22 27H19Z"/><circle cx="26.500" cy="25" r="2" fill="#fff"/></svg>
  <svg class="ti e1" width="34" height="37" viewBox="0 0 34 37"><path fill="#c62d33" d="M1 0L17 9L33 0V28L17 37L1 28ZM8 11V24L17 29L26 24V11L17 16Z"/></svg>
  <svg class="ti f1" width="35" height="33"><use href="#copilot"/></svg>
  <svg class="ti g1" width="38" height="48" viewBox="0 0 38 48"><path fill="#d6900e" d="M1 3Q1 2 3 2H13L16 6H18V12H1Z"/><path fill="#fdcb3f" d="M1 9L14 8L17 5H36Q38 5 38 8V34Q38 36 36 36H2Q0 36 0 34Z"/><path fill="#0f76c6" d="M7 35V29Q7 24 12 24H26Q31 24 31 29V35Z"/><path d="M13 30H26" stroke="#0a4b80" stroke-width="2"/><rect x="15" y="43" width="9" height="4" rx="2" fill="#9a9eb0"/></svg>
  <div class="pbi"><svg width="30" height="50" viewBox="0 0 30 50"><path fill="#d9930e" d="M16 0H28V36H16Z"/><path fill="#f0bb2c" d="M8 9H20V36H8Z"/><path fill="#fbe06c" d="M0 18H12V36H0Z"/><rect x="2" y="43" width="23" height="4" rx="2" fill="#4cc2ff"/></svg></div>
  <span class="spacer"></span>
  <svg class="tc" width="16" height="10" viewBox="0 0 16 10"><path d="M1 9L8 2L15 9" fill="none" stroke="#fff" stroke-width="1.800"/></svg>
  <svg class="cl" width="24" height="16" viewBox="0 0 24 16"><path fill="#e0e3ea" d="M6 16Q0 16 0 11Q1 6 6 6Q8 0 14 1Q19 2 20 7Q24 8 24 12Q23 16 19 16Z"/></svg>
  <div class="lang">ENG<br>IN</div>
  <svg class="wf" width="22" height="18" viewBox="0 0 22 18"><path d="M1 6Q11 -3 21 6M4.500 9.500Q11 3.500 17.500 9.500M8 13Q11 10 14 13" fill="none" stroke="#fff" stroke-width="1.800"/><circle cx="11" cy="15.500" r="1.800" fill="#fff"/></svg>
  <svg class="vo" width="24" height="20" viewBox="0 0 24 20"><path d="M1 7H5L11 2V18L5 13H1ZM14 7Q16 10 14 13M17 4Q21 10 17 16M20 2Q25 10 20 18" fill="none" stroke="#fff" stroke-width="1.600"/></svg>
  <svg class="ba" width="24" height="14" viewBox="0 0 24 14"><rect x="1" y="1" width="19" height="12" rx="3" fill="none" stroke="#fff" stroke-width="1.700"/><rect x="4" y="4" width="9" height="6" fill="#fff"/><path d="M22 5V9" stroke="#fff" stroke-width="2"/></svg>
  <div class="clock">08:06<br>18-02-2025</div>
</div>
<script src="labels.js"></script>
</body>
</html>
```
FILE: labels.js
```js
// Chart labels with a set length scale their glyphs along with the spacing.
document.querySelectorAll('text[textLength]').forEach(function (t) {
  t.setAttribute('lengthAdjust', 'spacingAndGlyphs');
});
```
FILE: styles.css
```css
* { box-sizing: border-box; }
body { margin: 0; width: 1920px; height: 1080px; overflow: hidden; font-family: "Open Sans", "Noto Sans", sans-serif; color: #252423; background: #f3f2f1; display: flex; flex-direction: column; }
svg { display: block; flex: none; }
h2, h3, h4, h5, h6 { margin: 0; font-weight: 400; }
button { border: 0; padding: 0; font: inherit; }
.defs { position: absolute; width: 0; height: 0; }
.spacer { flex: 1; }
.k { fill: none; stroke: #3b3a39; stroke-width: 1.7; }
.kg { fill: none; stroke: #8a8886; stroke-width: 1.5; }
.w { fill: #fafafa; stroke: #3b3a39; stroke-width: 1.5; }
.b { fill: #83beec; stroke: #0f6cbd; stroke-width: 1.5; }
.g { fill: #c8c6c4; stroke: #797775; stroke-width: 1.5; }
.bl { fill: none; stroke: #1e8bd3; stroke-width: 1.5; }

/* title bar */
.titlebar { height: 51px; flex: none; background: #3b3a39; color: #fff; display: flex; align-items: center; padding: 0 25px; font-size: 17px; }
.undo { margin-left: 22px; }
.redo { margin-left: 23px; }
.doc-name { margin: 6px 0 0 12px; white-space: nowrap; width: 367px; letter-spacing: -.2px; }
.caret { border: 6px solid transparent; border-top: 7px solid #fff; border-bottom: 0; margin-left: 8px; margin-top: 3px; }
.signin { margin-top: 2px; }
.avatar { margin: 0 47px 0 16px; }
.wc { margin-left: 50px; }
.avatar + .wc { margin-left: 0; }

/* menu */
.menu { height: 53px; flex: none; background: #fafafa; display: flex; align-items: flex-start; font-size: 20px; padding-right: 9px; }
.menu a { height: 47px; line-height: 49px; white-space: nowrap; }
.menu .m1 { margin-left: 34px; width: 87px; }
.menu .m2 { width: 59px; margin-right: 45px; font-weight: 700; letter-spacing: -.4px; border-bottom: 5px solid #117865; }
.menu .m3 { width: 100px; letter-spacing: -.2px; }
.menu .m4 { width: 136px; }
.menu .m5 { width: 91px; }
.menu .m6 { width: 132px; }
.share { width: 125px; height: 36px; margin-top: 6px; background: #117865; color: #fff; border-radius: 6px; display: flex; align-items: center; font-size: 17px; padding-left: 10px; }
.share span { margin: 0 7px 0 13px; letter-spacing: -.1px; }

/* ribbon */
.ribbon { height: 136px; flex: none; background: #fafafa; display: flex; box-shadow: 0 2px 7px rgba(0,0,0,.22); position: relative; z-index: 5; }
.grp { border-right: 1px solid #d2d0ce; height: 133px; margin-top: 1px; display: flex; flex-direction: column; flex: none; }
.btns { display: flex; flex: 1; }
.grp h6 { font-size: 14px; height: 17px; line-height: 17px; text-align: center; letter-spacing: -.1px; color: #3b3a39; }
.rb { display: flex; flex-direction: column; align-items: center; font-size: 17px; line-height: 24px; text-align: center; padding-top: 6px; letter-spacing: -.3px; flex: none; }
.rb > svg { margin-bottom: 4px; }
.rb span { white-space: nowrap; }
.rb b { display: inline-block; width: 7px; height: 7px; border: solid #3b3a39; border-width: 0 2px 2px 0; transform: rotate(45deg); margin: 0 2px 4px 5px; }
.rb b.solo { margin: 0 0 7px; }
.rb .cp { margin: 4px 0 8px; }
.dim { color: #c8c6c4; }
.dim b { border-color: #b8b6b4; }
.clipboard { width: 240px; }
.paste { width: 42px; margin-left: 21px; letter-spacing: -.5px; }
.paste svg { margin-left: -1px; }
.clip-list { margin-left: 15px; font-size: 17px; display: flex; flex-direction: column; }
.clip-list div { display: flex; align-items: center; height: 36px; }
.clip-list span { margin-left: 6px; margin-top: -1px; white-space: nowrap; letter-spacing: -.1px; }
.data { width: 550px; } .data .btns { padding-left: 12px; }
.queries { width: 173px; } .queries .btns { padding-left: 15px; }
.insert { width: 220px; } .insert .btns { padding-left: 14px; }
.calc { width: 278px; } .calc .btns { padding-left: 14px; }
.sens { width: 109px; } .shr, .cop { width: 88px; }
.w53 { width: 53px; } .w56 { width: 56px; } .w60 { width: 60px; } .w64 { width: 64px; } .w66 { width: 66px; } .w68 { width: 68px; } .w70 { width: 70px; } .w76 { width: 76px; } .w78 { width: 78px; } .w86 { width: 86px; } .w87 { width: 87px; } .w90 { width: 90px; } .w104 { width: 104px; } .w108 { width: 108px; }
.fx { font: italic 31px "Liberation Serif", serif; fill: #a9a7a5; }
.collapse { margin: 118px 7px 0 auto; }

/* workspace */
.workspace { height: 732px; flex: none; display: flex; }
.rail { width: 61px; border-right: 1px solid #d8d6d4; background: linear-gradient(#117865, #117865) 0 0 / 4px 60px no-repeat #f3f2f1; display: flex; flex-direction: column; padding: 18px 0 0 19px; gap: 35px; }
.rail svg:nth-child(3) { margin-left: -2px; }
.rail svg:nth-child(4) { margin: -1px 0 0 -4px; overflow: visible; }
.dax { font: 700 10px "Open Sans", sans-serif; fill: #797775; }
.center { width: 1317px; display: flex; flex-direction: column; flex: none; }
.upper { display: flex; height: 679px; }
.stage { width: 1268px; background: #fff; padding: 3px 0 0 119px; }
.filters { width: 49px; background: #fff; border-left: 1px solid #b3b0ad; display: flex; flex-direction: column; align-items: center; padding-top: 19px; gap: 22px; }
.filters .funnel { margin-left: 4px; }
.filters span { writing-mode: vertical-rl; font-size: 19px; font-weight: 700; line-height: 24px; margin: -11px 4px 0 0; letter-spacing: -.05px; }

/* report page */
.page { position: relative; width: 1030px; height: 673px;
  background:
    repeating-linear-gradient(90deg, #6e6c72 0 3px, transparent 3px 6px) 0 0 / 100% 3px no-repeat,
    repeating-linear-gradient(90deg, #6e6c72 0 3px, transparent 3px 6px) 0 100% / 100% 3px no-repeat,
    repeating-linear-gradient(#6e6c72 0 3px, transparent 3px 6px) 0 0 / 3px 100% no-repeat,
    repeating-linear-gradient(#6e6c72 0 3px, transparent 3px 6px) 100% 0 / 3px 100% no-repeat,
    linear-gradient(#f1f1f1, #f1f1f1) 4px 3px / 1022px 667px no-repeat;
  box-shadow: 0 0 12px rgba(0,0,0,.05); }
.title-strip { height: 54px; margin: 0 5px 0 4px; background: linear-gradient(#fff, #fff) 0 4px no-repeat; font: 700 31px/49px "Liberation Serif", serif; letter-spacing: -.1px; white-space: nowrap; padding-left: 219px; }
.v { position: absolute; }
.v > svg { width: 100%; height: 100%; overflow: visible; }
.din { font-family: Roboto, sans-serif; font-weight: 700; }
.seg { font-family: "Open Sans", sans-serif; font-weight: 700; }
.thin { font-weight: 500; }
.lab { font-family: "Open Sans", sans-serif; font-weight: 700; font-size: 9.6px; }
.mid { text-anchor: middle; }
.wht { fill: #fff; }
.grid { fill: none; stroke-width: 1; stroke-dasharray: 1 3; }

.card1 { left: 4px; top: 59px; width: 122px; height: 103px; background: #c02cb6; border-radius: 15px; box-shadow: inset 0 0 0 3px #2f1735, 6px 6px 9px rgba(47,23,53,.4); }
.card2 { left: 139px; top: 61px; width: 93px; height: 96px; background: #9fe545; border-radius: 9px; box-shadow: inset 0 0 0 1px #b57fa6, 6px 6px 9px rgba(32,200,160,.4); }
.card3 { left: 246px; top: 61px; width: 93px; height: 97px; background: #8a4fd2; border-radius: 9px; box-shadow: inset 0 0 0 1px #a5b07a, 6px 6px 9px rgba(240,50,120,.45); }
.reason { left: 349px; top: 61px; width: 494px; height: 79px; background: #fff; padding: 5px 0 0 10px; font-size: 9.2px; font-weight: 600; line-height: 12px; letter-spacing: -.2px; color: #000; }
.reason span { display: block; height: 13px; }
.reason div { display: flex; gap: 1px; margin: 0 0 0 9px; }
.reason b { width: 152px; height: 56px; border: 1px solid #5f9c4a; background: #54f20a; color: #2f32c8; font: 700 13.5px/56px "Open Sans", sans-serif; text-align: center; letter-spacing: 0; }
.vtools { left: 724px; top: 140px; display: flex; gap: 5px; }
.vtools i { width: 36px; height: 17px; background: #fff; }
.slicer { background: #fff; display: flex; flex-direction: column; gap: 2.5px; }
.slicer h5 { font: 700 13px/18px Roboto, sans-serif; display: flex; justify-content: space-between; align-items: flex-start; }
.slicer b { display: flex; align-items: center; justify-content: center; text-align: center; font-weight: 600; font-size: 10px; line-height: 11.3px; }
.avenue { left: 4px; top: 171px; width: 108px; height: 331px; padding: 3px 16px 0 17.5px; }
.avenue h5 { color: #e0185c; margin: 0 -7px -3px -8.5px; } .avenue h5 svg { margin: 4px 0 0; }
.avenue b { height: 74.5px; background: #f083bb; border: 1px solid #b0809c; color: #6a18cd; letter-spacing: -.3px; }
.avenue b.sel { background: #333; border-color: #777; color: #fff; font-weight: 700; }
.source { left: 865px; top: 54px; width: 161px; height: 414px; padding: 3px 17px 0 19px; }
.source h5 { color: #2f32c8; margin: 0 -8px -3px -9px; line-height: 18px; } .source h5 svg { margin: 3px 0 0; }
.source b { height: 95.2px; background: #c0d62f; border: 1px solid #93a04a; color: #3aa3a0; font-size: 9.4px; line-height: 12px; letter-spacing: -.25px; }
.savings { left: 120px; top: 172px; width: 180px; height: 179px; background: #833156; border-radius: 12px; box-shadow: inset 0 0 0 2px #35001b, 5px 5px 9px rgba(60,90,120,.35); }
.donut { left: 315px; top: 164px; width: 189px; height: 188px; background: #858c91; border-radius: 17px; box-shadow: inset 0 0 0 2px #6b9bc0, 5px 5px 9px rgba(80,120,150,.4); }
.objective { left: 515px; top: 160px; width: 328px; height: 170px; background: #f7bfdd; border-radius: 7px; box-shadow: inset 0 0 0 1px #a3cf8f, 5px 5px 8px rgba(150,90,140,.4); }
.monitor { left: 120px; top: 362px; width: 180px; height: 137px; background: #c5d93f; border-radius: 9px; box-shadow: inset 0 0 0 1.5px #d41d22, 6px 6px 9px rgba(150,40,90,.38); }
.bysource { left: 315px; top: 362px; width: 299px; height: 137px; background: #37d7d7; border-radius: 15px; box-shadow: inset 0 0 0 1.5px #dc1f72, 5px 6px 9px rgba(200,225,80,.45); }
.gender { left: 622px; top: 351px; width: 233px; height: 162px; background: #fff; }
.duration { left: 4px; top: 510px; width: 274px; height: 147px; background: #d0c54b; border-radius: 15px; box-shadow: inset 0 0 0 1px #c4d93a, 6px 7px 9px rgba(125,70,205,.42); }
.reasonby { left: 315px; top: 513px; width: 282px; height: 144px; background: #d0a92a; border-radius: 16px; box-shadow: inset 0 0 0 1.5px #2f32c8, 6px 7px 9px rgba(90,165,225,.45); }
.durby { left: 622px; top: 518px; width: 179px; height: 152px; background: #3da7ad; border-radius: 14px; box-shadow: inset 0 0 0 1px #4d9fe0, 5px 0 9px rgba(200,225,80,.5); }
.sourceby { left: 855px; top: 480px; width: 159px; height: 190px; background: #dbd374; border-radius: 18px; box-shadow: inset 0 0 0 1.5px #2f32c8, 7px 2px 9px rgba(230,60,150,.4); }

/* page tabs */
.tabs { height: 53px; display: flex; background: #f3f2f1; border-bottom: 1px solid #d8d6d4; }
.tools { width: 191px; display: flex; padding-left: 15px; }
.desk { margin-top: 6px; } .phone { margin: 7px 0 0 39px; } .arr { margin: 20px 0 0 30px; }
.tabs span { width: 108.8px; background: #fff; border-left: 1px solid #c8c6c4; text-align: center; line-height: 55px; font-size: 16.5px; letter-spacing: -.2px; }
.tabs .on { width: 110px; border-bottom: 6px solid #117865; font-weight: 700; letter-spacing: -.5px; position: relative; }
.tabs em { position: absolute; right: 7px; top: 3px; line-height: 20px; font-style: normal; font-size: 15px; }
.add { width: 59px; background: #117865; display: flex; align-items: center; justify-content: center; }

/* side panes */
.viz { width: 271px; border-left: 1px solid #dddbd9; border-right: 1px solid #dddbd9; position: relative; display: flex; flex-direction: column; overflow: hidden; }
.fields { flex: 1; border-bottom: 1px solid #d8d6d4; }
.ph { display: flex; justify-content: space-between; align-items: center; padding: 13px 11px 0 12px; height: 46px; }
h2 { font-size: 22.5px; font-weight: 600; letter-spacing: -.2px; line-height: 32px; }
h3 { font-size: 17px; font-weight: 600; padding: 11px 0 0 12px; line-height: 24px; letter-spacing: -.2px; }
.modes { display: flex; padding: 5px 0 0 12px; height: 55px; }
.tile { width: 48px; height: 48px; background: #d2d0ce; border-radius: 3px; padding: 4px 0 0 6px; }
.fmt { margin: 6px 0 0 56px; }
.rule { margin-top: 4px; }
.icons { display: grid; grid-template-columns: repeat(6, 28px); grid-auto-rows: 28px; gap: 14px; padding: 16px 0 0 16px; }
.icons svg { width: 28px; height: 28px; overflow: visible; }
.n123 { font: 400 13px "Open Sans", sans-serif; fill: #1e8bd3; }
.rr { font: 700 22px "Open Sans", sans-serif; fill: #1e84c6; }
.py { font: 600 24px "Open Sans", sans-serif; fill: #1e84c6; }
.more { display: flex; gap: 7px; padding: 23px 0 0 18px; }
.more i { width: 3px; height: 3px; border-radius: 50%; background: #222; }
.wells { display: flex; justify-content: space-between; margin-top: 29px; border-top: 1px solid #d8d6d4; height: 215px; font-size: 17px; color: #333; overflow: hidden; }
.wbody { width: 260px; padding-left: 6px; }
.wbody h4 { padding: 8px 0 0 12px; height: 44px; line-height: 34px; font-size: 17px; }
.wbody .tt { height: 48px; padding-top: 11px; color: #444; font-weight: 600; letter-spacing: -.2px; }
.drop { height: 43px; border: 1px dashed #c0bebc; background: #fff; line-height: 38px; padding-left: 15px; letter-spacing: -.05px; white-space: nowrap; }
.drop.cut { padding-left: 12px; margin-top: 10px; height: 50px; }
.keep { display: flex; justify-content: space-between; align-items: center; padding: 0 23px 0 12px; height: 34px; }
.keep span:first-child { padding-bottom: 2px; }
.toggle { width: 48px; height: 24px; border-radius: 12px; background: #117865; color: #fff; font-size: 13px; line-height: 24px; display: flex; align-items: center; gap: 4px; padding-left: 7px; }
.toggle i { width: 12px; height: 12px; border-radius: 50%; background: #fff; }
.thumb { width: 9px; height: 193px; margin-top: 3px; border-radius: 5px; background: #d2d0ce; }
.viz::after { content: ""; position: absolute; left: 0; right: 0; bottom: 0; height: 12px; background: #f3f2f1; border-bottom: 1px solid #d8d6d4; }
.search { margin: 22px 6px 0 7px; height: 36px; background: #fff; border: 1px solid #d2d0ce; border-bottom-color: #605e5c; border-radius: 5px; display: flex; align-items: center; font-size: 19px; color: #605e5c; padding-left: 18px; gap: 11px; }
.search span { padding-top: 2px; }
.tbl { display: flex; align-items: center; padding: 19px 0 0 25px; font-size: 17px; color: #333; height: 46px; letter-spacing: -.1px; }
.tbl svg + svg { margin: 0 9px 0 10px; }

/* status bar */
.status { height: 35px; flex: none; display: flex; align-items: center; font-size: 17px; color: #444; padding: 3px 27px 0 6px; }
.status > svg { margin-top: -4px; }
.pct { margin: -4px 29px 0 20px; width: 34px; color: #605e5c; letter-spacing: -.7px; }

/* taskbar */
.taskbar { flex: 1; border-top: 2px solid #000; display: flex; align-items: flex-start; color: #fff;
  background: linear-gradient(90deg, #1f2229 0, #1d232c 300px, #12244c 370px, #121f55 600px, #0f1c62 700px, #122455 760px, #101e5e 880px, #14225a 960px, #1c2040 1060px, #13205a 1150px, #161e40 1180px, #1b1f33 1220px, #12205a 1280px, #172040 1370px, #1b1f2c 1400px, #1b2030 1920px); box-shadow: inset 0 2px #3d4763; }
.start { margin: 18px 19px 0 500px; }
.tsearch { width: 330px; height: 48px; margin-top: 11px; border-radius: 24px; background: #343d6e; border: 1px solid #525a86; display: flex; align-items: center; padding-left: 17px; font-size: 18px; color: #d3d6e6; }
.tsearch span { margin: 0 0 0 13px; }
.art { margin-left: auto; margin-right: 6px; overflow: visible; }
.ti { margin-top: 17px; }
.a { margin-left: 18px; } .b1 { margin-left: 27px; } .c1 { margin-left: 30px; } .d1 { margin-left: 29px; } .e1 { margin-left: 30px; } .f1 { margin: 19px 0 0 31px; } .g1 { margin-left: 29px; }
.pbi { width: 53px; height: 60px; margin: 5px 0 0 17px; border-radius: 7px; background: #272c40; border: 1px solid #3a3f52; box-shadow: 6px 0 0 -1px #242a3c; padding: 11px 0 0 16px; }
.tc { margin: 31px 27px 0 0; } .cl { margin: 28px 26px 0 0; }
.lang { font-size: 15.5px; line-height: 22px; text-align: center; margin-top: 13px; width: 38px; letter-spacing: -.2px; }
.wf { margin: 27px 11px 0 27px; } .vo { margin: 25px 13px 0 0; } .ba { margin: 28px 20px 0 0; }
.clock { font-size: 17px; line-height: 24px; text-align: right; margin: 10px 29px 0 0; width: 100px; white-space: nowrap; }
```
